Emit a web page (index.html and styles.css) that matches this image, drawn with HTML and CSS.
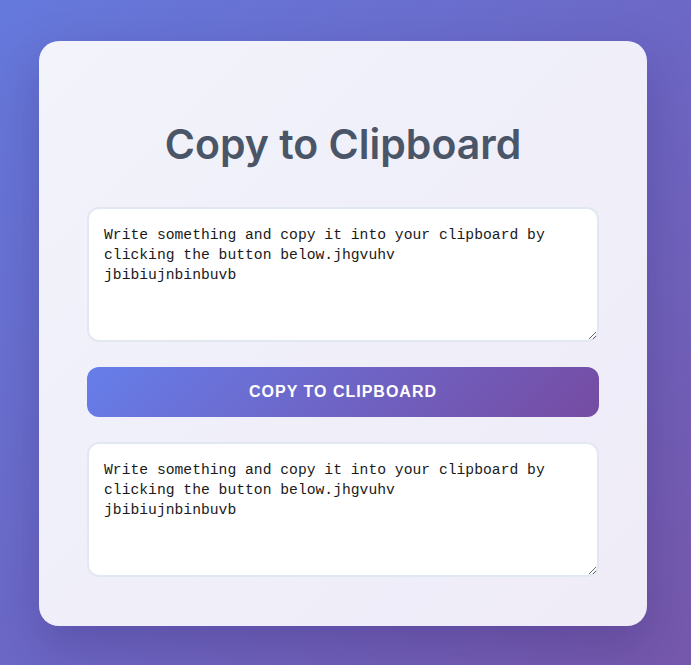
FILE: index.html
```html
<!DOCTYPE html>
<html lang="en">
<head>
<meta charset="utf-8">
<title>Copy to Clipboard</title>
<link rel="stylesheet" href="styles.css">
</head>
<body>
<main class="page">
  <section class="card">
    <h1 class="title">Copy to Clipboard</h1>
    <textarea class="field" spellcheck="false">Write something and copy it into your clipboard by clicking the button below.jhgvuhv
jbibiujnbinbuvb</textarea>
    <button class="copy-btn" type="button">Copy to clipboard</button>
    <textarea class="field" spellcheck="false">Write something and copy it into your clipboard by clicking the button below.jhgvuhv
jbibiujnbinbuvb</textarea>
  </section>
</main>
</body>
</html>
```

FILE: styles.css
```css
* { box-sizing: border-box; }
html, body { margin: 0; height: 100%; }
body {
  background: linear-gradient(135deg, #6579dc 0%, #6c68c6 50%, #7658ab 100%);
  font-family: "Liberation Sans", Arial, sans-serif;
  overflow: hidden;
}
.page {
  padding: 41px 44px 0 39px;
}
.card {
  width: 608px;
  background: linear-gradient(135deg, #f2f3fb 0%, #efeef9 60%, #efecf8 100%);
  border-radius: 20px;
  padding: 48px 48px 49px;
  box-shadow: 0 20px 50px rgba(40, 20, 90, 0.25);
  display: flex;
  flex-direction: column;
  gap: 25px;
}
.title {
  margin: 31px 0 14px;
  text-align: center;
  font-family: Inter, "Open Sans", sans-serif;
  font-weight: 600;
  font-size: 41px;
  line-height: 48px;
  letter-spacing: 0;
  color: #4a5568;
}
.field {
  display: block;
  width: 100%;
  height: 135px;
  border: 2px solid #e2e8f0;
  border-radius: 12px;
  padding: 16px 15px 14px;
  background: #fff;
  font-family: "Liberation Mono", "DejaVu Sans Mono", monospace;
  font-size: 14.7px;
  line-height: 20px;
  color: #1a1a1a;
  resize: vertical;
  outline: none;
}
.copy-btn {
  display: block;
  width: 100%;
  height: 50px;
  border: none;
  border-radius: 12px;
  background: linear-gradient(135deg, #667eea 0%, #764ba2 100%);
  color: #fff;
  font-family: "Liberation Sans", Arial, sans-serif;
  font-weight: 700;
  font-size: 16px;
  letter-spacing: 1px;
  text-transform: uppercase;
  cursor: pointer;
}
```
